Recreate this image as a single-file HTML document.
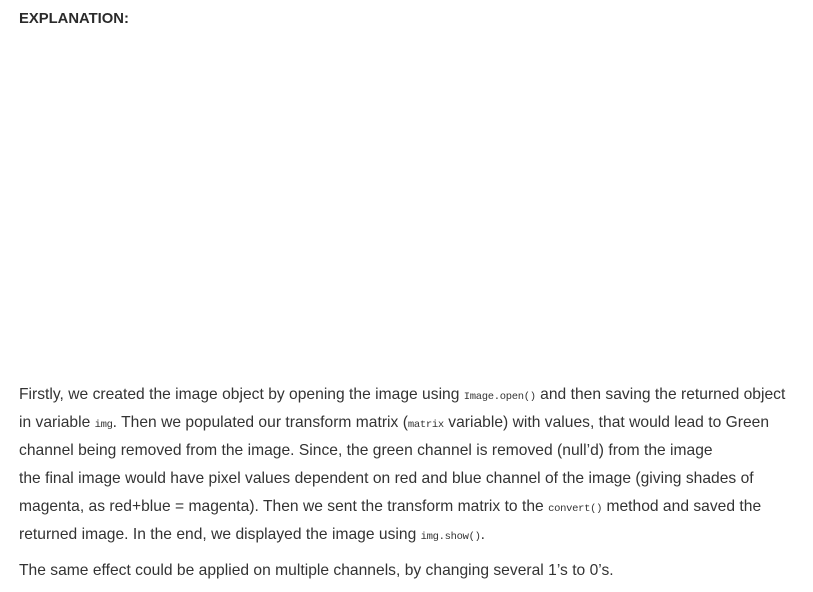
<!DOCTYPE html>
<html><head><style>
body{margin:0;background:#fff;width:813px;height:592px;overflow:hidden;font-family:"Liberation Sans",sans-serif;color:#333;}
.h{position:absolute;left:19px;top:11px;font-weight:bold;font-size:14.8px;color:#2a2a2a;}
.p{position:absolute;left:19px;font-size:15.6px;letter-spacing:0.02px;white-space:nowrap;line-height:28px;}
code{font-family:"Liberation Mono",monospace;font-size:10.5px;letter-spacing:-0.3px;line-height:0;vertical-align:baseline;}
</style></head><body>
<div class="h">EXPLANATION:</div>
<div class="p" style="top:381px">
Firstly, we created the image object by opening the image using <code>Image.open()</code> and then saving the returned object<br>
in variable <code>img</code>. Then we populated our transform matrix (<code>matrix</code> variable) with values, that would lead to Green<br>
channel being removed from the image. Since, the green channel is removed (null’d) from the image<br>
the final image would have pixel values dependent on red and blue channel of the image (giving shades of<br>
magenta, as red+blue = magenta). Then we sent the transform matrix to the <code>convert()</code> method and saved the<br>
returned image. In the end, we displayed the image using <code>img.show()</code>.
</div>
<div class="p" style="top:557px">The same effect could be applied on multiple channels, by changing several 1’s to 0’s.</div>
</body></html>
